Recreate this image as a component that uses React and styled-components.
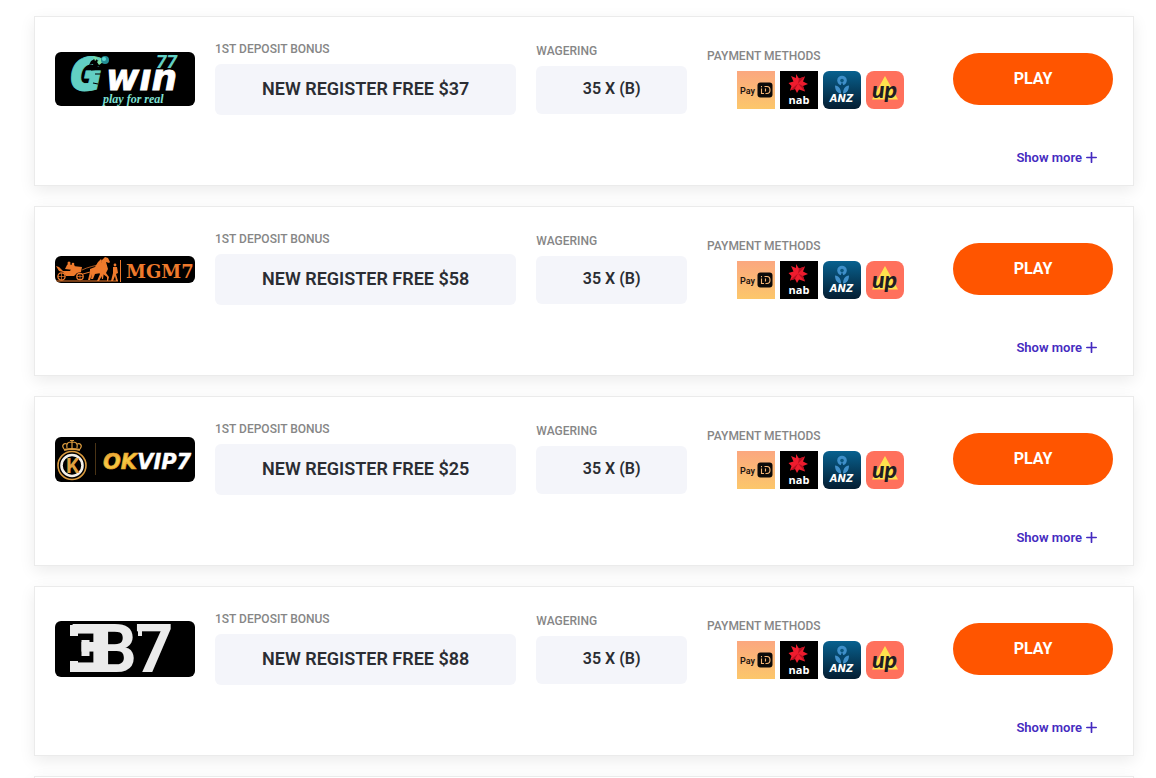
import React from "react";
import styled, { createGlobalStyle } from "styled-components";

const offers = [
  { id: "gwin77", Logo: GwinLogo, bonus: "NEW REGISTER FREE $37", wagering: "35 X (B)" },
  { id: "mgm7", Logo: MgmLogo, bonus: "NEW REGISTER FREE $58", wagering: "35 X (B)" },
  { id: "okvip7", Logo: OkvipLogo, bonus: "NEW REGISTER FREE $25", wagering: "35 X (B)" },
  { id: "eb7", Logo: EbLogo, bonus: "NEW REGISTER FREE $88", wagering: "35 X (B)" },
];

function App() {
  return (
    <>
      <GlobalStyle />
      <Page>
        {offers.map((offer) => (
          <Offer key={offer.id} {...offer} />
        ))}
        <Card />
      </Page>
    </>
  );
}

export default App;

function Offer({ Logo, bonus, wagering }) {
  return (
    <Card>
      <Row>
        <Logo />
        <div>
          <Label>1ST DEPOSIT BONUS</Label>
          <Value $large>{bonus}</Value>
        </div>
        <div>
          <Label>WAGERING</Label>
          <Value>{wagering}</Value>
        </div>
        <div>
          <Label>PAYMENT METHODS</Label>
          <Payments>
            <PayIdIcon />
            <NabIcon />
            <AnzIcon />
            <UpIcon />
          </Payments>
        </div>
        <PlayButton href="#play">PLAY</PlayButton>
      </Row>
      <Footer>
        <MoreButton type="button">
          Show more
          <svg width="11" height="11" viewBox="0 0 11 11" aria-hidden="true">
            <path d="M5.5 0.8v9.4M0.8 5.5h9.4" stroke="currentColor" strokeWidth="1.7" strokeLinecap="round" />
          </svg>
        </MoreButton>
      </Footer>
    </Card>
  );
}

/* casino logos */

function GwinLogo() {
  return (
    <LogoBox viewBox="0 0 140 54" role="img" aria-label="Gwin77">
      <rect width="140" height="54" fill="#000" />
      <text fontFamily="Open Sans" fontWeight="800" fontStyle="italic" fill="#62cfc3">
        <tspan x="14" y="39" fontSize="48" stroke="#62cfc3" strokeWidth="0.8">G</tspan>
        <tspan x="51" y="38" fontFamily="DejaVu Sans" fontSize="36" fill="#fff" stroke="#fff" strokeWidth="0.8">wın</tspan>
        <tspan x="101" y="16" fontFamily="Roboto" fontSize="19">77</tspan>
      </text>
      <path d="M36 9l5-3 2 3 4-2-2 5 3 3-6-1-3 3-1-5-4 1z" fill="#000" />
      <path d="M38 4l5 2-3 3zM42 10l4-4 2 4-4 3z" fill="#7be0a6" />
      <circle cx="50" cy="8" r="4" fill="#238f96" />
      <circle cx="49" cy="7" r="2" fill="#5fd9d2" />
      <path d="M36 18l9-1M40 22h6M38 31l5 1" stroke="#000" strokeWidth="1.2" />
      <text x="48" y="51" fontFamily="Liberation Serif" fontWeight="700" fontStyle="italic" fontSize="12" fill="#7fe0d6">play for real</text>
    </LogoBox>
  );
}

function MgmLogo() {
  return (
    <LogoBox viewBox="0 0 140 27" role="img" aria-label="MGM7">
      <rect width="140" height="27" fill="#000" />
      <g fill="none" stroke="#ee7a2c">
        <circle cx="6.5" cy="20.5" r="3.6" strokeWidth="1.3" />
        <circle cx="25" cy="20.5" r="3.2" strokeWidth="1.3" />
        <path d="M3 20.5h7M6.5 17v7M22 20.5h6M25 17.5v6" strokeWidth="0.7" />
        <path d="M1 25h62" strokeWidth="1.2" />
        <path d="M28 18l7-2 6-1" strokeWidth="1" />
        <path d="M65.5 4v22" strokeWidth="1" />
        <path d="M27 14c6-3 12-4 20-6" strokeWidth="0.7" />
      </g>
      <g fill="#ee7a2c">
        <path d="M1 10l3 1 4 4h7l3-5 9 1-1 5-4 1-3 3H11l-3-4-4-1z" />
        <path d="M10 13l2-4 2-2 2 2 2-1 2 2-2 4z" />
        <circle cx="14" cy="7" r="1.5" />
        <circle cx="18" cy="8" r="1.3" />
        <path d="M35 13l5-2 3-5 3-3 1 2-1 3 3 8-1 7h-1l-1-6-6 1-2 5h-2l1-5-2 6h-2l2-8z" />
        <path d="M42 13l3-3 2-6 3-3 3 1 2 4-1 1-3-1 2 7-2 4 3 4-1 4h-1v-4l-4-3-4 7h-2l3-7z" />
        <circle cx="60" cy="9" r="1.4" />
        <path d="M58 11h4l1 6-2 1 2 7h-2l-1-5-2 5h-2l2-8z" />
      </g>
      <text x="71" y="22" fontFamily="DejaVu Serif" fontWeight="700" fontSize="18" fill="#ee7a2c">MGM7</text>
    </LogoBox>
  );
}

function OkvipLogo() {
  return (
    <LogoBox viewBox="0 0 140 45" role="img" aria-label="OKVIP7">
      <defs>
        <linearGradient id="gold" x1="0" y1="0" x2="1" y2="1">
          <stop offset="0" stopColor="#d98a2b" />
          <stop offset="0.3" stopColor="#f9c944" />
          <stop offset="1" stopColor="#e09a1d" />
        </linearGradient>
      </defs>
      <rect width="140" height="45" fill="#000" />
      <circle cx="17" cy="28.5" r="14" fill="none" stroke="#d99a3e" strokeWidth="1.6" />
      <circle cx="17" cy="28.5" r="10.5" fill="none" stroke="#f4f1ea" strokeWidth="2.6" />
      <text x="11" y="36" fontFamily="Roboto" fontWeight="700" fontSize="21" fill="#dfa03f">K</text>
      <g fill="none" stroke="#d99a3e" strokeWidth="1.2">
        <path d="M9 13c4-1.5 12-1.5 16 0" strokeWidth="2" />
        <path d="M9 12c-3-4 0-6 3-5M25 12c3-4 0-6-3-5M12 11c-1-5 1-6 5-6s6 1 5 6M17 4v8M15 3.5h4" />
      </g>
      <path d="M40.5 6v32" stroke="#4a3416" strokeWidth="1" />
      <text x="48" y="32" fontFamily="DejaVu Sans" fontWeight="700" fontStyle="italic" fontSize="21" fill="#fff">
        <tspan fill="url(#gold)" stroke="#eda92f" strokeWidth="0.6">OK</tspan>
        <tspan stroke="#fff" strokeWidth="0.4">VIP7</tspan>
      </text>
    </LogoBox>
  );
}

function EbLogo() {
  return (
    <LogoBox viewBox="0 0 140 56" role="img" aria-label="EB7">
      <rect width="140" height="56" fill="#000" />
      <text y="51" fontFamily="Roboto" fontWeight="700" fontSize="67" fill="#ebebeb">
        <tspan x="11" fontFamily="DejaVu Sans" fontSize="65">Ǝ</tspan>
        <tspan x="39">B</tspan>
        <tspan x="80">7</tspan>
      </text>
      <path d="M12 15h14.5v23H12z" fill="#000" />
      <g fill="#ebebeb">
        <path d="M15 4h8v11h-8zM15 40h8v11h-8zM26.5 19h8v16h-8zM83 4h4v11h-4z" />
      </g>
    </LogoBox>
  );
}

/* payment methods */

function PayIdIcon() {
  return (
    <PaymentIcon viewBox="0 0 38 38" role="img" aria-label="PayID">
      <defs>
        <linearGradient id="payid" x1="0" y1="0" x2="0" y2="1">
          <stop offset="0" stopColor="#fba77f" />
          <stop offset="1" stopColor="#fcc76b" />
        </linearGradient>
      </defs>
      <rect width="38" height="38" fill="url(#payid)" />
      <text x="3" y="23" fontFamily="Roboto" fontWeight="600" fontSize="9" fill="#1c1510">Pay</text>
      <rect x="20.5" y="11.5" width="15" height="15" rx="3" fill="#0d0b09" />
      <g fill="none" stroke="#f7b775" strokeWidth="1.1">
        <path d="M24.5 17.5v5h2.5M24.5 15v1.2M27.5 15.5h2.5c4 0 4 7 0 7h-1.5M28.5 17.5v3" />
      </g>
    </PaymentIcon>
  );
}

function NabIcon() {
  return (
    <PaymentIcon viewBox="0 0 38 38" role="img" aria-label="nab">
      <rect width="38" height="38" fill="#000" />
      <path d="M16 3l3 4.5 6-2-2 5 5 2.5-5 2 2 5.5-6-2-2 3.5-2-4-5 1.5 1.5-4.5L8.5 12l5-1.5L11 5l5 2z" fill="#ee1c2e" />
      <path d="M19 7.5l6-2-7 7zM23 15l2 5.5-7-8zM15 18l-5 1.5 8-7z" fill="#b50f20" />
      <text x="19" y="33" textAnchor="middle" fontFamily="Open Sans" fontWeight="700" fontSize="11" fill="#fff">nab</text>
    </PaymentIcon>
  );
}

function AnzIcon() {
  return (
    <PaymentIcon viewBox="0 0 38 38" $radius={6} role="img" aria-label="ANZ">
      <defs>
        <linearGradient id="anz" x1="0" y1="0" x2="0" y2="1">
          <stop offset="0" stopColor="#08618f" />
          <stop offset="1" stopColor="#041d31" />
        </linearGradient>
      </defs>
      <rect width="38" height="38" fill="url(#anz)" />
      <g fill="#3f8fc9">
        <circle cx="19" cy="9.5" r="4.8" />
        <path d="M12 14.5c4 .5 6 3.500 6 8-4-.5-6-3.500-6-8zM26 14.500c-4 .5-6 3.500-6 8 4-.5 6-3.500 6-8z" />
      </g>
      <path d="M19 11l2 5-2 6-2-6z" fill="#06456b" />
      <circle cx="19" cy="9.5" r="1.8" fill="#0a567f" />
      <text x="18.5" y="31" textAnchor="middle" fontFamily="DejaVu Sans" fontWeight="700" fontStyle="italic" fontSize="10" fill="#fff">ANZ</text>
    </PaymentIcon>
  );
}

function UpIcon() {
  return (
    <PaymentIcon viewBox="0 0 38 38" $radius={8} role="img" aria-label="up">
      <rect width="38" height="38" fill="#ff705c" />
      <path d="M19 5l13 23.5H6z" fill="#ffe14d" />
      <text x="18.5" y="27" textAnchor="middle" fontFamily="Lato" fontWeight="900" fontStyle="italic" fontSize="23" fill="#1f1d24">up</text>
    </PaymentIcon>
  );
}

const GlobalStyle = createGlobalStyle`
  * {
    box-sizing: border-box;
  }

  body {
    margin: 0;
    background: #fff;
    font-family: Roboto, "Liberation Sans", sans-serif;
  }
`;

const Page = styled.main`
  display: flex;
  flex-direction: column;
  gap: 20px;
  max-height: 100vh;
  padding: 16px 22px 0 34px;
  overflow: hidden;
`;

const Card = styled.section`
  flex-shrink: 0;
  padding: 26px 20px 19px;
  background: #fff;
  border: 1px solid #ebebeb;
  box-shadow: 0 5px 15px rgba(0, 0, 0, 0.08);
`;

const Row = styled.div`
  display: grid;
  grid-template-columns: 140px 4fr 2fr 3fr 160px;
  align-items: center;
  gap: 20px;
`;

const LogoBox = styled.svg`
  display: block;
  width: 100%;
  border-radius: 6px;
`;

const Label = styled.div`
  margin-bottom: 8px;
  color: #868686;
  font-size: 12px;
  font-weight: 500;
  line-height: 13px;
`;

const Value = styled.div`
  padding: 11px 12px 13px;
  border-radius: 6px;
  background: #f4f5fa;
  color: #2b2d33;
  font-size: ${(props) => (props.$large ? "18px" : "16px")};
  font-weight: 600;
  line-height: ${(props) => (props.$large ? "27px" : "24px")};
  text-align: center;
`;

const Payments = styled.div`
  display: flex;
  justify-content: center;
  gap: 5px;
`;

const PaymentIcon = styled.svg`
  display: block;
  width: 38px;
  height: 38px;
  border-radius: ${(props) => props.$radius || 0}px;
`;

const PlayButton = styled.a`
  border-radius: 26px;
  background: #ff5500;
  color: #fff;
  font-size: 16px;
  font-weight: 700;
  line-height: 52px;
  text-align: center;
  text-decoration: none;
`;

const Footer = styled.div`
  display: flex;
  justify-content: flex-end;
  padding: 34px 16px 0;
`;

const MoreButton = styled.button`
  display: flex;
  align-items: center;
  gap: 4px;
  padding: 0;
  border: 0;
  background: none;
  color: #452bc0;
  font-family: inherit;
  font-size: 13px;
  font-weight: 600;
  line-height: 17px;
  cursor: pointer;
`;
